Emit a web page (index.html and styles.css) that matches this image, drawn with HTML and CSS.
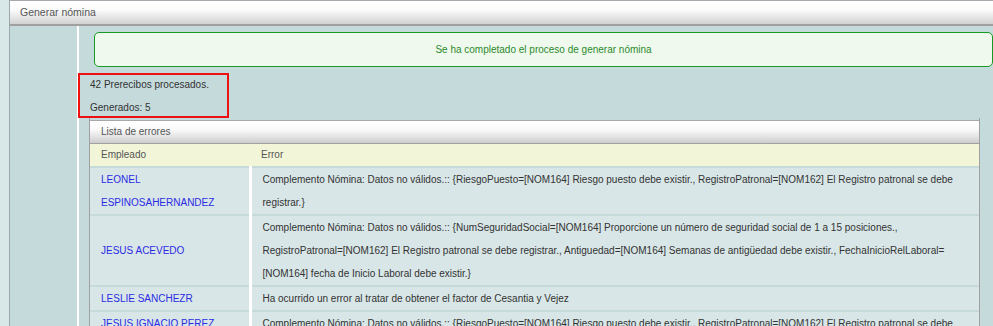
FILE: index.html
```html
<!DOCTYPE html>
<html lang="es">
<head>
<meta charset="utf-8">
<title>Generar nómina</title>
<link rel="stylesheet" href="styles.css">
</head>
<body>
<div class="shell">
  <div class="titlebar">Generar nómina</div>
  <div class="main">
    <div class="content">
      <div class="alert">Se ha completado el proceso de generar nómina</div>
      <div class="summary">
        <p>42 Prerecibos procesados.</p>
        <p class="second">Generados: 5</p>
      </div>
      <div class="panel">
        <div class="panel-head">Lista de errores</div>
        <table class="errors">
          <thead>
            <tr><th class="c-emp">Empleado</th><th>Error</th></tr>
          </thead>
          <tbody>
            <tr>
              <td class="c-emp"><a class="name">LEONEL<br>ESPINOSAHERNANDEZ</a></td>
              <td>Complemento Nómina: Datos no válidos.:: {RiesgoPuesto=[NOM164] Riesgo puesto debe existir., RegistroPatronal=[NOM162] El Registro patronal se debe<br>registrar.}</td>
            </tr>
            <tr>
              <td class="c-emp"><a class="name">JESUS ACEVEDO</a></td>
              <td>Complemento Nómina: Datos no válidos.:: {NumSeguridadSocial=[NOM164] Proporcione un número de seguridad social de 1 a 15 posiciones.,<br>RegistroPatronal=[NOM162] El Registro patronal se debe registrar., Antiguedad=[NOM164] Semanas de antigüedad debe existir., FechaInicioRelLaboral=<br>[NOM164] fecha de Inicio Laboral debe existir.}</td>
            </tr>
            <tr>
              <td class="c-emp"><a class="name">LESLIE SANCHEZR</a></td>
              <td>Ha ocurrido un error al tratar de obtener el factor de Cesantia y Vejez</td>
            </tr>
            <tr>
              <td class="c-emp top"><a class="name">JESUS IGNACIO PEREZ</a></td>
              <td>Complemento Nómina: Datos no válidos.:: {RiesgoPuesto=[NOM164] Riesgo puesto debe existir., RegistroPatronal=[NOM162] El Registro patronal se debe<br>registrar.}</td>
            </tr>
          </tbody>
        </table>
      </div>
    </div>
  </div>
</div>
</body>
</html>
```
FILE: styles.css
```css
html, body {
  margin: 0;
  padding: 0;
  height: 100%;
  overflow: hidden;
}
body {
  background: #d8e8e8;
  font-family: "Liberation Sans", Arial, sans-serif;
  font-size: 10px;
  color: #333;
}
.shell {
  margin-left: 9px;
  border-left: 1px solid #9aa8a8;
  height: 100%;
  display: flex;
  flex-direction: column;
}
.titlebar {
  height: 23px;
  line-height: 23px;
  border-top: 1px solid #a4a8ac;
  border-bottom: 2px solid #a0a0a0;
  background: linear-gradient(#ffffff 0%, #fbfbfb 40%, #d2d2d2 100%);
  padding-left: 10px;
  color: #555;
  font-size: 10.5px;
}
.main {
  flex: 1;
  background: #c4dadb;
  padding-left: 67px;
  display: flex;
}
.content {
  flex: 1;
  border-left: 2px solid #ffffff;
  padding-top: 6px;
  display: flex;
  flex-direction: column;
}
.alert {
  margin-left: 15px;
  height: 33px;
  line-height: 33px;
  border: 1px solid #179a25;
  border-radius: 5px;
  background: #eff9ee;
  color: #2b8a2b;
  text-align: center;
}
.summary {
  margin-top: 6px;
  margin-left: -1px;
  width: 137px;
  border: 2px solid #ee1111;
  padding: 2px 0 0 10px;
}
.summary p {
  margin: 0;
  line-height: 16px;
}
.summary .second {
  margin-top: 7px;
}
.panel {
  margin-left: 10px;
  margin-right: 13px;
  border-left: 1px solid #a0a0a0;
  border-right: 1px solid #a0a0a0;
  padding-top: 2px;
}
.panel-head {
  height: 22px;
  line-height: 22px;
  border-top: 1px solid #a8a8a8;
  border-bottom: 1px solid #a0a0a0;
  background: linear-gradient(#ffffff 0%, #fafafa 40%, #cdcdcd 100%);
  padding-left: 11px;
  color: #555;
}
.errors {
  width: 100%;
  border-collapse: collapse;
}
.errors th {
  background: #f2f5d8;
  color: #555;
  font-weight: normal;
  text-align: left;
  height: 22px;
  line-height: 22px;
  padding: 0 0 0 11px;
  border-bottom: 1px solid #a8a8a8;
}
.errors th.c-emp {
  padding-left: 11px;
  width: 149px;
}
.errors td {
  background: #d8e6e7;
  border-top: 2px solid #c6dadb;
  line-height: 23px;
  padding: 0 8px 0 11px;
  vertical-align: middle;
}
.errors td.c-emp {
  padding-left: 11px;
  padding-right: 0;
  border-right: 3px solid #ffffff;
}
.errors td.top {
  vertical-align: top;
}
.name {
  color: #2b2be4;
}
```
